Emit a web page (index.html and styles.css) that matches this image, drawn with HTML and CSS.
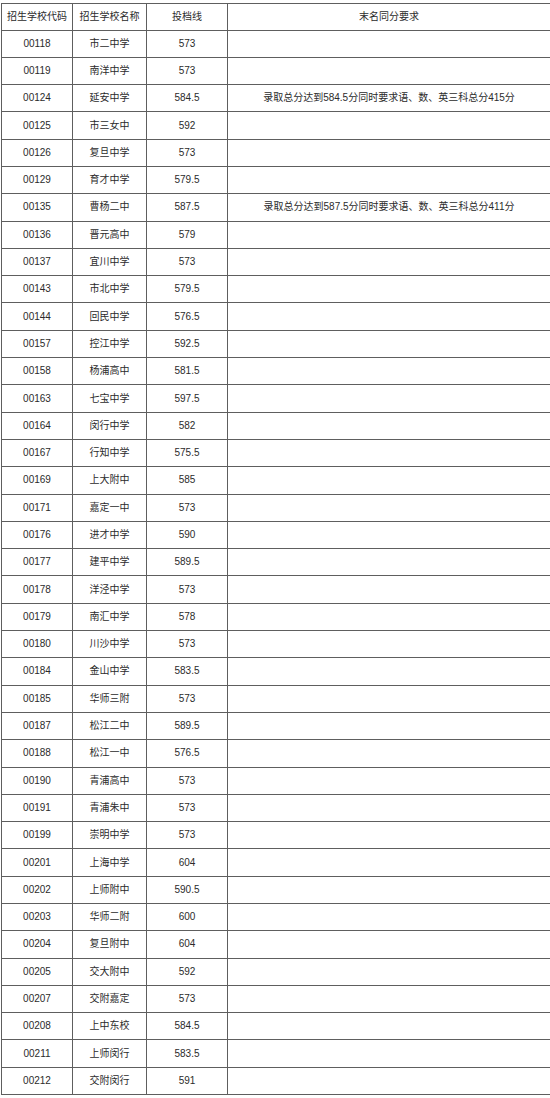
FILE: index.html
```html
<!DOCTYPE html>
<html lang="zh-CN">
<head>
<meta charset="utf-8">
<title>投档线</title>
<link rel="stylesheet" href="styles.css">
</head>
<body>
<table class="score-table">
<colgroup>
<col class="c-code"><col class="c-name"><col class="c-line"><col class="c-req">
</colgroup>
<thead>
<tr class="head"><th>招生学校代码</th><th>招生学校名称</th><th>投档线</th><th>末名同分要求</th></tr>
</thead>
<tbody>
<tr><td>00118</td><td>市二中学</td><td>573</td><td></td></tr>
<tr><td>00119</td><td>南洋中学</td><td>573</td><td></td></tr>
<tr><td>00124</td><td>延安中学</td><td>584.5</td><td>录取总分达到584.5分同时要求语、数、英三科总分415分</td></tr>
<tr><td>00125</td><td>市三女中</td><td>592</td><td></td></tr>
<tr><td>00126</td><td>复旦中学</td><td>573</td><td></td></tr>
<tr><td>00129</td><td>育才中学</td><td>579.5</td><td></td></tr>
<tr><td>00135</td><td>曹杨二中</td><td>587.5</td><td>录取总分达到587.5分同时要求语、数、英三科总分411分</td></tr>
<tr><td>00136</td><td>晋元高中</td><td>579</td><td></td></tr>
<tr><td>00137</td><td>宜川中学</td><td>573</td><td></td></tr>
<tr><td>00143</td><td>市北中学</td><td>579.5</td><td></td></tr>
<tr><td>00144</td><td>回民中学</td><td>576.5</td><td></td></tr>
<tr><td>00157</td><td>控江中学</td><td>592.5</td><td></td></tr>
<tr><td>00158</td><td>杨浦高中</td><td>581.5</td><td></td></tr>
<tr><td>00163</td><td>七宝中学</td><td>597.5</td><td></td></tr>
<tr><td>00164</td><td>闵行中学</td><td>582</td><td></td></tr>
<tr><td>00167</td><td>行知中学</td><td>575.5</td><td></td></tr>
<tr><td>00169</td><td>上大附中</td><td>585</td><td></td></tr>
<tr><td>00171</td><td>嘉定一中</td><td>573</td><td></td></tr>
<tr><td>00176</td><td>进才中学</td><td>590</td><td></td></tr>
<tr><td>00177</td><td>建平中学</td><td>589.5</td><td></td></tr>
<tr><td>00178</td><td>洋泾中学</td><td>573</td><td></td></tr>
<tr><td>00179</td><td>南汇中学</td><td>578</td><td></td></tr>
<tr><td>00180</td><td>川沙中学</td><td>573</td><td></td></tr>
<tr><td>00184</td><td>金山中学</td><td>583.5</td><td></td></tr>
<tr><td>00185</td><td>华师三附</td><td>573</td><td></td></tr>
<tr><td>00187</td><td>松江二中</td><td>589.5</td><td></td></tr>
<tr><td>00188</td><td>松江一中</td><td>576.5</td><td></td></tr>
<tr><td>00190</td><td>青浦高中</td><td>573</td><td></td></tr>
<tr><td>00191</td><td>青浦朱中</td><td>573</td><td></td></tr>
<tr><td>00199</td><td>崇明中学</td><td>573</td><td></td></tr>
<tr><td>00201</td><td>上海中学</td><td>604</td><td></td></tr>
<tr><td>00202</td><td>上师附中</td><td>590.5</td><td></td></tr>
<tr><td>00203</td><td>华师二附</td><td>600</td><td></td></tr>
<tr><td>00204</td><td>复旦附中</td><td>604</td><td></td></tr>
<tr><td>00205</td><td>交大附中</td><td>592</td><td></td></tr>
<tr><td>00207</td><td>交附嘉定</td><td>573</td><td></td></tr>
<tr><td>00208</td><td>上中东校</td><td>584.5</td><td></td></tr>
<tr><td>00211</td><td>上师闵行</td><td>583.5</td><td></td></tr>
<tr><td>00212</td><td>交附闵行</td><td>591</td><td></td></tr>
</tbody>
</table>
</body>
</html>
```
FILE: styles.css
```css
html, body {
  margin: 0;
  padding: 0;
  background: #ffffff;
}
body {
  padding: 3px 0 0 1px;
  font-family: "Liberation Sans", "Noto Sans CJK SC", sans-serif;
  font-size: 10px;
  color: #2b2b2b;
}
.score-table {
  border-collapse: collapse;
  table-layout: fixed;
  width: 549px;
}
.c-code { width: 71px; }
.c-name { width: 74px; }
.c-line { width: 81px; }
.c-req { width: 323px; }
.score-table th,
.score-table td {
  border: 1px solid #5e5e5e;
  padding: 0;
  text-align: center;
  vertical-align: middle;
  font-weight: normal;
  white-space: nowrap;
  line-height: 12px;
}
.score-table .head th {
  height: 25.5px;
}
.score-table tbody td {
  height: 26.3px;
}
```
